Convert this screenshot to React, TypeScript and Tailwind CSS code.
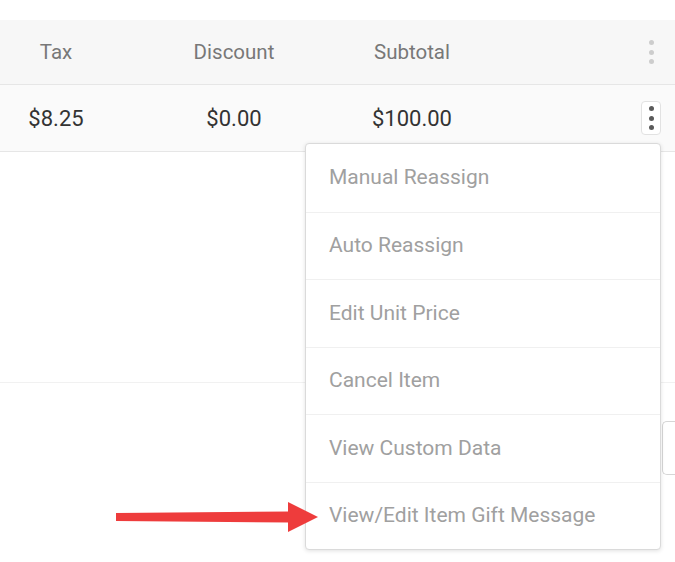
// Order line table with the row actions menu open
import React from 'react';

const columns = [
  { label: 'Tax', value: '$8.25' },
  { label: 'Discount', value: '$0.00' },
  { label: 'Subtotal', value: '$100.00' },
];

const menuItems = [
  'Manual Reassign',
  'Auto Reassign',
  'Edit Unit Price',
  'Cancel Item',
  'View Custom Data',
  'View/Edit Item Gift Message',
];

const Dots: React.FC<{ color: string }> = ({ color }) => (
  <div className="flex flex-col items-center gap-[4.5px]">
    <span className={`block w-[5px] h-[5px] rounded-full ${color}`} />
    <span className={`block w-[5px] h-[5px] rounded-full ${color}`} />
    <span className={`block w-[5px] h-[5px] rounded-full ${color}`} />
  </div>
);

export default function App() {
  return (
    <div className="relative w-[675px] h-[562px] overflow-hidden bg-white font-['Roboto','Noto_Sans',sans-serif]">
      <div className="h-5" />

      {/* header */}
      <div className="flex items-center h-[65px] bg-[#f7f7f7] border-b border-[#e6e6e6]">
        <div className="flex ml-[-33px]">
          {columns.map((c) => (
            <div key={c.label} className="w-[178px] text-center text-[20.5px] text-[#787878]">
              {c.label}
            </div>
          ))}
        </div>
        <div className="flex-1 flex justify-end pr-[14px]">
          <div className="w-[20px] flex justify-center">
            <Dots color="bg-[#cdcdcd]" />
          </div>
        </div>
      </div>

      {/* line row */}
      <div className="flex items-center h-[67px] bg-[#fafafa] border-b border-[#e6e6e6]">
        <div className="flex ml-[-33px]">
          {columns.map((c) => (
            <div key={c.label} className="w-[178px] text-center text-[22px] text-[#333]">
              {c.value}
            </div>
          ))}
        </div>
        <div className="flex-1 flex justify-end pr-[14px]">
          <button className="w-[20px] h-[34px] flex items-center justify-center border border-[#e2e2e2] rounded-[4px] bg-white">
            <Dots color="bg-[#5a5a5a]" />
          </button>
        </div>
      </div>

      <div className="h-[231px] border-b border-[#f1f1f1]" />

      <div className="flex justify-end pt-[38px]">
        <div className="w-[13px] h-[54px] border border-r-0 border-[#d6d6d6] rounded-l-[5px]" />
      </div>

      {/* actions menu */}
      <div className="absolute left-[305px] top-[143px] w-[356px] bg-white border border-[#dadada] rounded-[4px] shadow-[0_1px_4px_rgba(0,0,0,0.12)]">
        {menuItems.map((item, i) => (
          <div
            key={item}
            className={`flex items-center h-[67.5px] pl-[23px] text-[21px] text-[#a0a0a0] ${i > 0 ? 'border-t border-[#f0f0f0]' : ''}`}
          >
            {item}
          </div>
        ))}
      </div>

      {/* annotation arrow */}
      <svg className="absolute left-[114px] top-[500px]" width="206" height="34" viewBox="0 0 206 34">
        <polygon points="2,13 176,11.5 176,22.5 2,21" fill="#ee3c3c" />
        <polygon points="174,2 204,17 174,32" fill="#ee3c3c" />
      </svg>
    </div>
  );
}
